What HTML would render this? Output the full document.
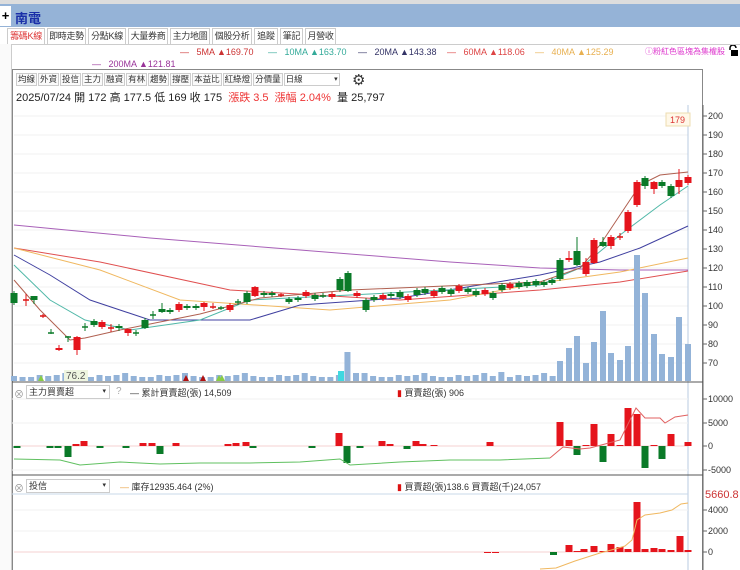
<!DOCTYPE html>
<html><head><meta charset="utf-8"><style>
*{margin:0;padding:0;box-sizing:border-box}
body{width:740px;height:570px;overflow:hidden;background:#fff;font-family:"Liberation Sans","Noto Sans CJK TC",sans-serif;position:relative;font-size:11px;color:#333}
.a{position:absolute;white-space:nowrap}
.tab{position:absolute;top:28px;height:16px;border:1px solid #ccc;border-bottom:none;font-size:9px;letter-spacing:-0.3px;line-height:15px;text-align:center;background:#fff;color:#333;overflow:hidden}
.tb{display:inline-block;border:1px solid #ccc;height:13px;font-size:8.5px;line-height:11px;padding:0 1px;margin-right:1px;color:#333;background:#fafafa}
</style></head><body>
<div class="a" style="left:0;top:0;width:740px;height:4px;background:#ddd"></div>
<div class="a" style="left:0;top:4px;width:740px;height:23px;background:#95b3d7"></div>
<div class="a" style="left:0;top:6px;width:11px;height:20px;background:#fff;font-weight:bold;font-size:13px;line-height:19px;text-align:center;color:#000">+</div>
<div class="a" style="left:15px;top:8px;font-size:13px;font-weight:bold;color:#1a2fa8">南電</div>
<div class="tab" style="left:7px;width:38px;color:#d33">籌碼K線</div>
<div class="tab" style="left:47px;width:39px">即時走勢</div>
<div class="tab" style="left:88px;width:38px">分點K線</div>
<div class="tab" style="left:128px;width:40px">大量券商</div>
<div class="tab" style="left:170px;width:40px">主力地圖</div>
<div class="tab" style="left:212px;width:40px">個股分析</div>
<div class="tab" style="left:254px;width:24px">追蹤</div>
<div class="tab" style="left:280px;width:23px">筆記</div>
<div class="tab" style="left:305px;width:31px">月營收</div>
<div class="a" style="left:0;top:44px;width:740px;height:1px;background:#ccc"></div>
<div class="a" style="left:0;top:44px;width:12px;height:526px;border-right:1px solid #ccc;background:#fafafa"></div>
<div class="a" style="left:180px;top:47px;font-size:9px;color:#c33">—&nbsp;&nbsp;&nbsp;5MA ▲169.70</div>
<div class="a" style="left:268px;top:47px;font-size:9px;color:#3a9">—&nbsp;&nbsp;&nbsp;10MA ▲163.70</div>
<div class="a" style="left:358px;top:47px;font-size:9px;color:#336">—&nbsp;&nbsp;&nbsp;20MA ▲143.38</div>
<div class="a" style="left:447px;top:47px;font-size:9px;color:#d44">—&nbsp;&nbsp;&nbsp;60MA ▲118.06</div>
<div class="a" style="left:535px;top:47px;font-size:9px;color:#e8b050">—&nbsp;&nbsp;&nbsp;40MA ▲125.29</div>
<div class="a" style="left:645px;top:46px;font-size:8px;color:#d3c">ⓘ粉紅色區塊為集權股</div>
<svg class="a" style="left:728px;top:45px" width="10" height="12"><path d="M2 5V3a3 3 0 0 1 6 0" fill="none" stroke="#000" stroke-width="1.5"/><rect x="3" y="5" width="7" height="6" fill="#000"/></svg>
<div class="a" style="left:92px;top:59px;font-size:9px;color:#939">—&nbsp;&nbsp;&nbsp;200MA ▲121.81</div>
<div class="a" style="left:12px;top:69px;width:691px;height:501px;border:1px solid #888;border-bottom:none"></div>
<div class="a" style="left:16px;top:73px"><span class="tb">均線</span><span class="tb">外資</span><span class="tb">投信</span><span class="tb">主力</span><span class="tb">融資</span><span class="tb">有林</span><span class="tb">趨勢</span><span class="tb">撐壓</span><span class="tb">本益比</span><span class="tb">紅綠燈</span><span class="tb">分價量</span><span class="tb" style="width:56px;background:#fff">日線 <span style="float:right;font-size:7px">▾</span></span></div>
<div class="a" style="left:352px;top:71px;font-size:15px;color:#333">⚙</div>
<div class="a" style="left:16px;top:89px;font-size:11px;color:#222">2025/07/24 開 172 高 177.5 低 169 收 175 &nbsp;<span style="color:#e33">漲跌 3.5 &nbsp;漲幅 2.04%</span> &nbsp;量 25,797</div>
<svg class="a" style="left:0;top:0" width="740" height="570" id="s"></svg>
<div class="a" style="left:14px;top:386px;font-size:10px;color:#999">⊗</div>
<div class="a" style="left:26px;top:385px;width:84px;height:14px;border:1px solid #ccc;font-size:9px;line-height:12px;padding-left:2px;color:#333">主力買賣超<span style="float:right;margin-right:3px;font-size:7px">▾</span></div>
<div class="a" style="left:116px;top:386px;font-size:10px;color:#aaa">?</div>
<div class="a" style="left:130px;top:386px;font-size:9px;color:#333">— 累計買賣超(張) 14,509</div>
<div class="a" style="left:397px;top:386px;font-size:9px;color:#333"><span style="color:#d11">▮</span> 買賣超(張) 906</div>
<div class="a" style="left:14px;top:480px;font-size:10px;color:#999">⊗</div>
<div class="a" style="left:26px;top:479px;width:84px;height:14px;border:1px solid #ccc;font-size:9px;line-height:12px;padding-left:2px;color:#333">投信<span style="float:right;margin-right:3px;font-size:7px">▾</span></div>
<div class="a" style="left:120px;top:480px;font-size:9px;color:#333"><span style="color:#e9a040">—</span> 庫存12935.464 (2%)</div>
<div class="a" style="left:397px;top:480px;font-size:9px;color:#333"><span style="color:#d11">▮</span> 買賣超(張)138.6 買賣超(千)24,057</div>
<script>
var s=document.getElementById('s'),h='';
function L(x1,y1,x2,y2,c,w){h+='<line x1="'+x1+'" y1="'+y1+'" x2="'+x2+'" y2="'+y2+'" stroke="'+c+'" stroke-width="'+(w||1)+'"/>';}
function R(x,y,w,hh,c){h+='<rect x="'+x+'" y="'+y+'" width="'+w+'" height="'+hh+'" fill="'+c+'"/>';}
function P(pts,c,w){h+='<polyline fill="none" stroke="'+c+'" stroke-width="'+(w||1)+'" points="'+pts+'"/>';}
function T(x,y,t,c,sz){h+='<text x="'+x+'" y="'+y+'" font-size="'+(sz||9)+'" fill="'+(c||'#333')+'" font-family="Liberation Sans">'+t+'</text>';}
for(var p=200;p>=70;p-=10){var y=116+(200-p)*1.9;L(14,y,688,y,'#f0f0f0');L(703,y,707,y,'#666');T(708,y+3,p);}
L(703,105,703,570,'#666');L(688,105,688,570,'#b8cbe0');
L(12,382,703,382,'#555');L(12,475,703,475,'#555');
L(12,399,688,399,'#f2f2f2');L(12,423,688,423,'#f2f2f2');L(12,470,688,470,'#f2f2f2');
[[399,'10000'],[423,'5000'],[446,'0'],[470,'-5000']].forEach(function(a){L(703,a[0],707,a[0],'#666');T(708,a[0]+3,a[1]);});
[[510,'4000'],[531,'2000'],[552,'0']].forEach(function(a){L(703,a[0],707,a[0],'#666');T(708,a[0]+3,a[1]);});
L(12,494,688,494,'#c8d8ea');T(705,498,'5660.8','#c33',11);
P('14,225 150,238 300,250 450,262 540,268 620,270 688,270','#a860b8');
P('14,248 100,262 230,290 400,300 540,290 620,282 688,271','#e05050');
P('14,248 100,270 180,300 330,310 450,300 540,283 620,272 688,258','#f0b860');
P('14,255 50,275 90,300 150,320 250,320 300,305 400,298 540,275 600,262 640,248 688,226','#4040a0');
P('14,265 50,300 85,320 130,330 200,320 250,300 350,295 540,285 580,268 620,235 660,205 688,186','#50b8a8');
P('14,280 40,310 70,340 85,338 120,330 160,322 200,314 260,298 350,290 540,282 580,268 600,245 620,215 640,185 660,175 688,172','#b06050');
var C=[[14,293,303],[26,300,300,294,306],[34,296,300,296,304],[43,316,316],[51,333,333,329,334],[59,350,348,345,351],[68,337,337,336,342],[77,337,350,336,355],[85,327,327,323,331],[94,321,325],[102,322,327],[111,328,328,324,332],[119,326,328,324,331],[128,329,333,329,336],[136,333,333,330,336],[145,320,328,318,329],[153,315,315,311,319],[162,309,312,303,313],[170,310,312],[179,304,310],[187,306,308,304,310],[196,306,308],[204,303,307,302,311],[213,307,307,303,309],[221,308,308],[230,305,310],[238,302,302,299,305],[247,293,302],[255,287,296,286,297],[264,293,295],[272,293,295],[281,295,295,293,297],[289,299,302],[298,298,300],[306,292,296],[315,295,299],[323,296,296,293,298],[332,294,297],[340,279,290],[348,273,291,271,292],[357,293,296],[366,300,310],[374,297,300],[383,295,299],[391,294,296],[400,292,297],[408,296,300],[417,290,295],[425,289,293],[434,291,296],[442,288,292],[451,290,294],[459,286,291],[468,289,292],[476,291,295],[485,290,294],[493,293,298],[502,285,290],[510,284,288],[519,283,287],[527,282,286],[536,281,285],[544,282,285],[552,280,283],
[560,260,279],[569,260,258,251,262],[577,251,265,237,266],[586,274,262,258,276],[594,263,240,238,264],[603,242,246,237,247],[611,246,237,235,249],[620,237,237,233,240],[628,231,212],[637,205,182,180,207],[645,178,186,176,189],[654,189,182,181,194],[662,182,186,180,188],[671,186,196,184,198],[679,187,180,169,194],[688,183,177,175,185]];
C.forEach(function(c,i){var x=c[0],o=c[1],cl=c[2],up=cl<o;var col=(cl==o)?(i%2?'#d11':'#0a7a28'):(up?'#e5141c':'#0a7a28');
if(i%3==1&&cl!=o&&i<60){col=col=='#e5141c'?'#0a7a28':'#e5141c';}
var hi=c[3]||Math.min(o,cl)-2,lo=c[4]||Math.max(o,cl)+2;L(x,hi,x,lo,col);var t=Math.min(o,cl),b=Math.max(o,cl);if(b-t<1.5)L(x-3,t,x+3,t,col,1.5);else R(x-3.5,t,7,b-t,col);});
for(var i=0;i<64;i++){var x=14+i*8.55;var hh=[5,4,4,6,5,6,8][i%7];if(i==39)hh=29;if(i==40)hh=8;if(i==57)hh=9;R(x-3,381-hh,6,hh,'#93b3d8');}
var V=[[560,361],[569,348],[577,336],[586,363],[594,342],[603,311],[611,353],[620,360],[628,346],[637,255],[645,293],[654,334],[662,354],[671,357],[679,317],[688,344]];
V.forEach(function(v){R(v[0]-3,v[1],6,381-v[1],'#93b3d8');});
R(338,371,6,10,'#40d8e0');
[41,203,222,186,219].forEach(function(x,i){h+='<polygon points="'+(x-3)+',381 '+(x+3)+',381 '+x+',375" fill="'+(i%2?'#b01010':'#8c4')+'"/>';});
R(64,370,24,11,'#eef5e0');T(66,379,'76.2','#555',10);
R(666,113,24,13,'#fff8e8');h+='<rect x="666" y="113" width="24" height="13" fill="none" stroke="#eedcb0"/>';T(670,123,'179','#d33',9);
L(14,446,688,446,'#f0c0c0',0.8);
var B=[[17,2,'g'],[50,2,'g'],[58,2,'g'],[68,11,'g'],[76,-2],[84,-5],[100,2,'g'],[126,2,'g'],[143,-3],[152,-3],[160,8,'g'],[176,-3],[228,-2],[236,-3],[246,-4],[253,2,'g'],[312,2,'g'],[339,-13],[347,17,'g'],[360,2,'g'],[382,-5],[390,-2],[407,3,'g'],[416,-5],[423,-2],[434,-1],[490,-4],[560,-24],[569,-6],[577,9,'g'],[586,-1],[594,-22],[603,16,'g'],[611,-12],[620,-1],[628,-38],[637,-32],[645,22,'g'],[654,-1],[662,13,'g'],[671,-12],[688,-4]];
B.forEach(function(b){var c=b[2]?'#0a7a28':'#e5141c';if(b[1]<0)R(b[0]-3.5,446+b[1],7,-b[1],c);else R(b[0]-3.5,446,7,b[1],c);});
P('14,459 60,460 80,465 120,462 160,464 200,463 250,463 300,462 340,459 350,465 400,462 450,460 500,460 550,458','#60c060');
P('550,458 563,447 580,449 590,448 605,444 620,440 636,408 645,418 660,418 665,423 675,417 688,415','#e06060');
L(14,552,688,552,'#f0c0c0',0.8);L(14,531,688,531,'#f2f2f2');L(14,510,688,510,'#f2f2f2');
[[569,545],[577,551],[584,549],[594,546],[603,551],[611,544],[620,547],[628,549],[637,502],[645,549],[654,548],[662,549],[671,550],[680,536],[688,550]].forEach(function(b){R(b[0]-3.5,b[1],7,552-b[1],'#e5141c');});
R(550,552,7,3,'#0a7a28');R(484,552,7,1,'#e5141c');R(492,552,7,1,'#e5141c');
P('540,569 556,568 575,561 600,553 615,549 625,546 632,540 637,520 645,515 660,513 672,510 681,504 688,503','#f0b860');
s.innerHTML=h;
</script>
</body></html>
